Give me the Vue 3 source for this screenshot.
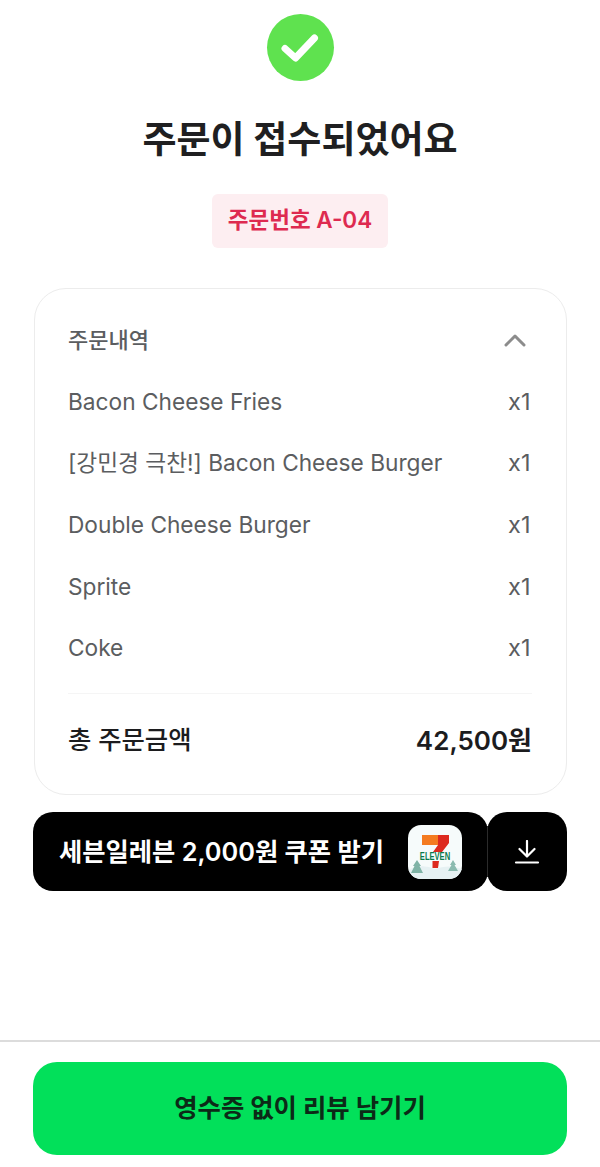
<template>
  <div class="page">
    <main class="content">
      <div class="check">
        <svg width="38" height="30" viewBox="0 0 38 30" fill="none">
          <path d="M4 15.5 L14.5 25 L33.5 5" stroke="#fff" stroke-width="7" stroke-linecap="round" stroke-linejoin="round" />
        </svg>
      </div>
      <h1 class="title">주문이 접수되었어요</h1>
      <div class="badge">주문번호 A-04</div>

      <section class="card">
        <div class="card-head">
          <span>주문내역</span>
          <svg width="24" height="16" viewBox="0 0 24 16" fill="none">
            <path d="M3 13 L12 4 L21 13" stroke="#8c8c8c" stroke-width="3" stroke-linecap="round" stroke-linejoin="round" />
          </svg>
        </div>
        <div v-for="item in items" :key="item" class="row">
          <span>{{ item }}</span>
          <span class="qty">x1</span>
        </div>
        <div class="line"></div>
        <div class="total">
          <span class="total-label">총 주문금액</span>
          <span class="total-price">42,500원</span>
        </div>
      </section>

      <div class="coupon">
        <div class="coupon-main">
          <span class="coupon-text">세븐일레븐 2,000원 쿠폰 받기</span>
          <div class="app-icon">
            <svg class="app-art" width="54" height="54" viewBox="0 0 54 54">
              <path d="M0 45 Q14 38 27 44 Q40 39 54 44 V54 H0 Z" fill="#e6f1f3" />
              <path d="M9 35 L13 41 L11.500 41 L15 48 H3 L6.500 41 L5 41 Z" fill="#7fb3a6" />
              <path d="M45 35 L48 40 L46.500 40 L50 46 H40 L43.500 40 L42 40 Z" fill="#8bbbb0" />
              <path d="M14 10 H30 V20 H14 Z" fill="#f47b20" />
              <path d="M30 10 H41 V18 L34 27 H25 L30 20 Z" fill="#dd2a1f" />
              <path d="M24.500 36 H31 L30 43 H24.500 Z" fill="#dd2a1f" />
            </svg>
            <span class="eleven">ELEVEN</span>
          </div>
        </div>
        <div class="coupon-down">
          <svg width="26" height="24" viewBox="0 0 26 24" fill="none">
            <path d="M13 1 V16 M5.500 9 L13 16.500 L20.500 9 M2 22.500 H24" stroke="#fff" stroke-width="2.200" stroke-linecap="round" stroke-linejoin="round" />
          </svg>
        </div>
      </div>
    </main>

    <footer class="footer">
      <button class="review-btn">영수증 없이 리뷰 남기기</button>
    </footer>
  </div>
</template>

<script setup>
const items = [
  'Bacon Cheese Fries',
  '[강민경 극찬!] Bacon Cheese Burger',
  'Double Cheese Burger',
  'Sprite',
  'Coke',
]
</script>

<style>
body {
  background: #fff;
}
</style>

<style scoped>
* {
  box-sizing: border-box;
}

.page {
  width: 600px;
  height: 1167px;
  display: flex;
  flex-direction: column;
  background: #fff;
  font-family: Inter, "Noto Sans CJK KR", sans-serif;
}

.content {
  flex: 1;
  display: flex;
  flex-direction: column;
  align-items: center;
  padding: 14px 33px 0;
}

.check {
  width: 67px;
  height: 67px;
  border-radius: 50%;
  background: #5fe24f;
  display: flex;
  align-items: center;
  justify-content: center;
}

.title {
  margin: 34px 0 0;
  height: 50px;
  line-height: 50px;
  font-size: 37px;
  font-weight: 700;
  color: #1f1f21;
  white-space: nowrap;
}

.badge {
  margin-top: 29px;
  width: 176px;
  height: 54px;
  padding-bottom: 6px;
  border-radius: 6px;
  background: #fdeef1;
  color: #de2a50;
  font-size: 22.500px;
  font-weight: 600;
  display: flex;
  align-items: center;
  justify-content: center;
  white-space: nowrap;
}

.card {
  margin-top: 40px;
  width: 533px;
  height: 507px;
  border: 1.5px solid #ececec;
  border-radius: 32px;
  padding: 20px 33.500px 0;
  display: flex;
  flex-direction: column;
}

.card-head,
.row {
  display: flex;
  align-items: center;
  justify-content: space-between;
  height: 61.7px;
  flex: none;
  line-height: 28px;
  font-size: 22.700px;
  color: #5b5d60;
  white-space: nowrap;
}

.card-head {
  font-size: 22px;
  font-weight: 500;
}

.card-head svg {
  margin-right: 5px;
}

.qty {
  margin-right: 1.500px;
  font-size: 23.500px;
}

.line {
  margin-top: 14px;
  height: 1px;
  background: #f5f5f5;
}

.total {
  display: flex;
  align-items: center;
  justify-content: space-between;
  margin-top: 15px;
  height: 62px;
  padding-bottom: 4px;
  color: #1c1c1e;
}

.total-label {
  font-size: 25.400px;
  font-weight: 500;
}

.total-price {
  font-size: 26px;
  font-weight: 600;
}

.coupon {
  margin-top: 17px;
  width: 534px;
  height: 79px;
  display: flex;
}

.coupon-main {
  width: 455px;
  background: #000;
  border-radius: 20px;
  color: #fff;
  font-size: 25.300px;
  font-weight: 600;
  display: flex;
  align-items: center;
  justify-content: space-between;
  padding: 0 26px;
  white-space: nowrap;
}

.coupon-text {
  padding-bottom: 4px;
}

.coupon-down {
  position: relative;
  width: 80px;
  margin-left: -1px;
  background: #000;
  border-radius: 20px;
  display: flex;
  align-items: center;
  justify-content: center;
}

.coupon-down::before {
  content: "";
  position: absolute;
  left: 0;
  top: 14px;
  bottom: 14px;
  width: 1px;
  background: #2b2b2b;
}

.app-icon {
  position: relative;
  width: 54px;
  height: 54px;
  border-radius: 13px;
  background: #f6fbfb;
  overflow: hidden;
  flex: none;
}

.app-art {
  display: block;
}

.eleven {
  position: absolute;
  left: 0;
  right: 0;
  top: 26px;
  text-align: center;
  font-family: "Liberation Sans", sans-serif;
  font-size: 10.500px;
  line-height: 11px;
  font-weight: 700;
  color: #0b7a4b;
  transform: scaleX(0.72);
}

.footer {
  height: 127px;
  flex: none;
  border-top: 2px solid #dcdcdc;
  padding: 20px 33px 0;
}

.review-btn {
  width: 534px;
  height: 93px;
  padding-bottom: 6px;
  border: none;
  border-radius: 24px;
  background: #02e05a;
  color: #0c2a17;
  font-family: inherit;
  font-size: 25.400px;
  font-weight: 700;
}
</style>
